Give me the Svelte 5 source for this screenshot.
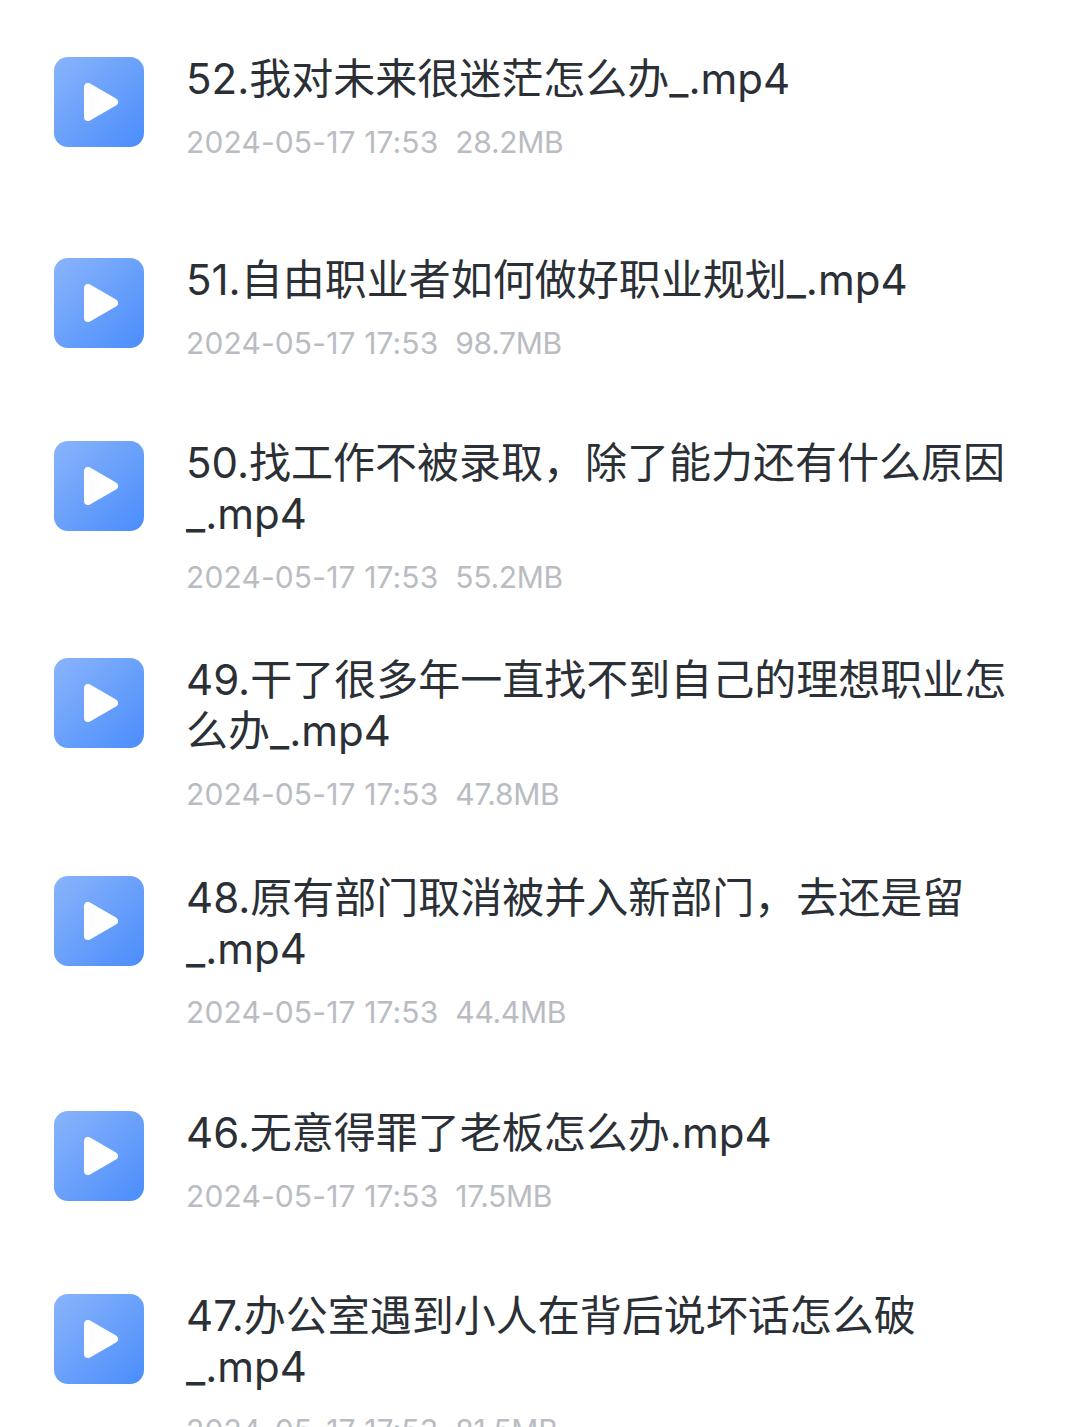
<script>
  const time = "2024-05-17 17:53";
  const files = [
    { name: "52.我对未来很迷茫怎么办_.mp4", size: "28.2MB", height: 201 },
    { name: "51.自由职业者如何做好职业规划_.mp4", size: "98.7MB", height: 183 },
    { name: "50.找工作不被录取，除了能力还有什么原因_.mp4", size: "55.2MB", height: 217 },
    { name: "49.干了很多年一直找不到自己的理想职业怎么办_.mp4", size: "47.8MB", height: 218 },
    { name: "48.原有部门取消被并入新部门，去还是留_.mp4", size: "44.4MB", height: 235 },
    { name: "46.无意得罪了老板怎么办.mp4", size: "17.5MB", height: 183 },
    { name: "47.办公室遇到小人在背后说坏话怎么破_.mp4", size: "81.5MB", height: 217 },
  ];
</script>

<div class="list">
  {#each files as file}
    <div class="row" style="height: {file.height}px">
      <div class="icon">
        <svg width="34" height="38" viewBox="0 0 34 38">
          <polygon points="4,4 4,34 30,19" fill="#fff" stroke="#fff" stroke-width="8" stroke-linejoin="round" />
        </svg>
      </div>
      <div class="info">
        <div class="name">{file.name}</div>
        <div class="meta"><span class="time">{time}</span><span class="size">{file.size}</span></div>
      </div>
    </div>
  {/each}
</div>

<style>
  :global(body) {
    margin: 0;
    background: #fff;
    overflow: hidden;
  }

  .list {
    height: 1374px;
    overflow: hidden;
    padding: 53px 62px 0 54px;
  }

  .row {
    display: flex;
    align-items: flex-start;
    gap: 42px;
  }

  .icon {
    flex: none;
    width: 90px;
    height: 90px;
    margin-top: 4px;
    border-radius: 14px;
    background: linear-gradient(135deg, #8ab4fb, #4a8dfb);
    display: flex;
    align-items: center;
    justify-content: center;
  }

  .icon svg {
    margin-left: 4px;
  }

  .info {
    flex: 1;
    min-width: 0;
  }

  .name {
    font-family: "Inter", "Noto Sans CJK SC", sans-serif;
    font-size: 42px;
    line-height: 51.2px;
    color: #2b2f36;
  }

  .meta {
    margin-top: 20px;
    font-family: "Inter", sans-serif;
    font-size: 30px;
    line-height: 36px;
    color: #b9bcc2;
    white-space: pre;
  }

  .time {
    letter-spacing: 0.12px;
    margin-right: 17px;
  }

  .size {
    letter-spacing: -0.3px;
  }
</style>
